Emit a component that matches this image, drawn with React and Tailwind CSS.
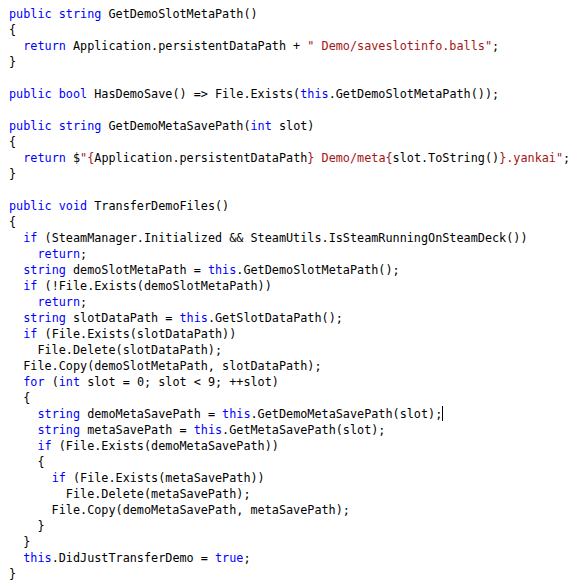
import React from 'react';

const KEYWORDS = /\b(public|string|bool|int|void|return|if|for|this|true)\b/g;

// «...» marks string literal parts, | marks the caret
const SOURCE = [
    'public string GetDemoSlotMetaPath()',
    '{',
    '  return Application.persistentDataPath + «" Demo/saveslotinfo.balls"»;',
    '}',
    '',
    'public bool HasDemoSave() => File.Exists(this.GetDemoSlotMetaPath());',
    '',
    'public string GetDemoMetaSavePath(int slot)',
    '{',
    '  return $«"{»Application.persistentDataPath«} Demo/meta{»slot.ToString()«}.yankai"»;',
    '}',
    '',
    'public void TransferDemoFiles()',
    '{',
    '  if (SteamManager.Initialized && SteamUtils.IsSteamRunningOnSteamDeck())',
    '    return;',
    '  string demoSlotMetaPath = this.GetDemoSlotMetaPath();',
    '  if (!File.Exists(demoSlotMetaPath))',
    '    return;',
    '  string slotDataPath = this.GetSlotDataPath();',
    '  if (File.Exists(slotDataPath))',
    '    File.Delete(slotDataPath);',
    '  File.Copy(demoSlotMetaPath, slotDataPath);',
    '  for (int slot = 0; slot < 9; ++slot)',
    '  {',
    '    string demoMetaSavePath = this.GetDemoMetaSavePath(slot);|',
    '    string metaSavePath = this.GetMetaSavePath(slot);',
    '    if (File.Exists(demoMetaSavePath))',
    '    {',
    '      if (File.Exists(metaSavePath))',
    '        File.Delete(metaSavePath);',
    '      File.Copy(demoMetaSavePath, metaSavePath);',
    '    }',
    '  }',
    '  this.DidJustTransferDemo = true;',
    '}',
];

const renderCode = (text, keyBase) => {
    const out = [];
    let last = 0;
    let m;
    KEYWORDS.lastIndex = 0;
    while ((m = KEYWORDS.exec(text)) !== null) {
        if (m.index > last) out.push(text.slice(last, m.index));
        out.push(<span key={keyBase + '-' + m.index} className="text-[#0000ff]">{m[0]}</span>);
        last = m.index + m[0].length;
    }
    if (last < text.length) out.push(text.slice(last));
    return out;
};

const Line = ({ src, idx }) => {
    const parts = src.split(/(«[^»]*»|\|)/);
    return (
        <div className="h-4 whitespace-pre">
            {parts.map((p, i) => {
                if (p === '|') return <span key={i} className="inline-block w-px h-[15px] bg-black align-[-3px]" />;
                if (p.startsWith('«')) return <span key={i} className="text-[#a31515]">{p.slice(1, -1)}</span>;
                return <React.Fragment key={i}>{renderCode(p, idx + '-' + i)}</React.Fragment>;
            })}
            {src === '' ? '\u00a0' : null}
        </div>
    );
};

const App = () => {
    return (
        <div className="w-[581px] h-[587px] bg-white overflow-hidden pt-[6px] pl-[9px] text-black text-[11.8px] leading-4" style={{ fontFamily: '"DejaVu Sans Mono", "Liberation Mono", monospace' }}>
            {SOURCE.map((src, i) => <Line key={i} src={src} idx={i} />)}
        </div>
    );
};

export default App;
